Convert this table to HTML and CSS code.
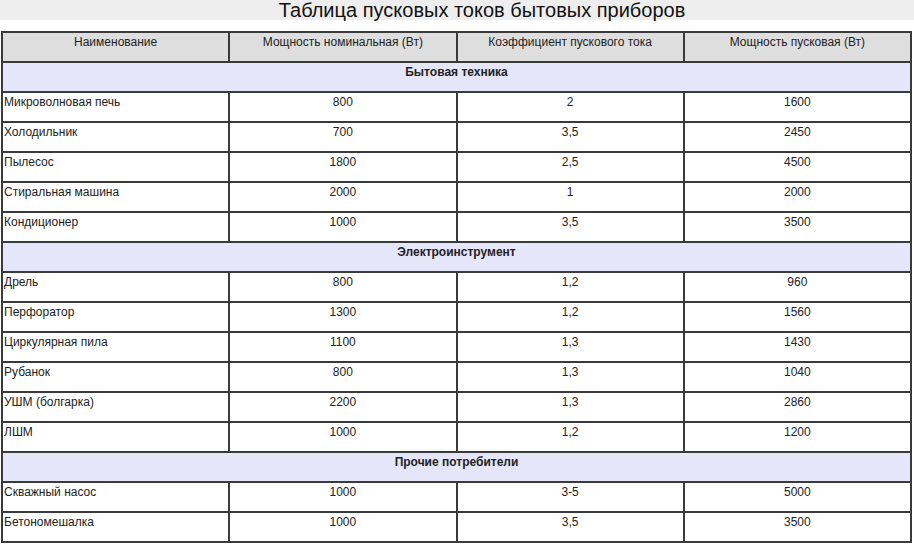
FILE: index.html
```html
<!DOCTYPE html>
<html lang="ru">
<head>
<meta charset="utf-8">
<title>Таблица пусковых токов бытовых приборов</title>
<link rel="stylesheet" href="styles.css">
</head>
<body>
<div class="title">Таблица пусковых токов бытовых приборов</div>
<table class="grid">
  <colgroup><col><col><col><col></colgroup>
  <tr class="head"><td>Наименование</td><td>Мощность номинальная (Вт)</td><td>Коэффициент пускового тока</td><td>Мощность пусковая (Вт)</td></tr>
  <tr class="section"><td colspan="4">Бытовая техника</td></tr>
  <tr><td class="name">Микроволновая печь</td><td>800</td><td>2</td><td>1600</td></tr>
  <tr><td class="name">Холодильник</td><td>700</td><td>3,5</td><td>2450</td></tr>
  <tr><td class="name">Пылесос</td><td>1800</td><td>2,5</td><td>4500</td></tr>
  <tr><td class="name">Стиральная машина</td><td>2000</td><td>1</td><td>2000</td></tr>
  <tr><td class="name">Кондиционер</td><td>1000</td><td>3,5</td><td>3500</td></tr>
  <tr class="section"><td colspan="4">Электроинструмент</td></tr>
  <tr><td class="name">Дрель</td><td>800</td><td>1,2</td><td>960</td></tr>
  <tr><td class="name">Перфоратор</td><td>1300</td><td>1,2</td><td>1560</td></tr>
  <tr><td class="name">Циркулярная пила</td><td>1100</td><td>1,3</td><td>1430</td></tr>
  <tr><td class="name">Рубанок</td><td>800</td><td>1,3</td><td>1040</td></tr>
  <tr><td class="name">УШМ (болгарка)</td><td>2200</td><td>1,3</td><td>2860</td></tr>
  <tr><td class="name">ЛШМ</td><td>1000</td><td>1,2</td><td>1200</td></tr>
  <tr class="section"><td colspan="4">Прочие потребители</td></tr>
  <tr><td class="name">Скважный насос</td><td>1000</td><td>3-5</td><td>5000</td></tr>
  <tr><td class="name">Бетономешалка</td><td>1000</td><td>3,5</td><td>3500</td></tr>
</table>
</body>
</html>
```
FILE: styles.css
```css
html, body {
  margin: 0;
  padding: 0;
  background: #ffffff;
}
body {
  font-family: "Liberation Sans", Arial, sans-serif;
  color: #222222;
}
.title {
  height: 20px;
  line-height: 20px;
  background: #eeeeee;
  font-size: 20px;
  color: #111111;
  text-align: center;
  padding-left: 50px;
}
.grid {
  margin: 11px 0 0 1px;
  width: 911px;
  border-collapse: collapse;
  table-layout: fixed;
  font-size: 12px;
}
.grid col {
  width: 25%;
}
.grid tr {
  height: 30px;
}
.grid td {
  border: 2px solid #3a3a3a;
  padding: 2px 1px 0 1px;
  vertical-align: top;
  text-align: center;
  line-height: 14px;
}
.grid td.name {
  text-align: left;
}
.grid .head td {
  background: #dedede;
}
.grid .section td {
  background: #e6e6fa;
  font-weight: bold;
}
```
